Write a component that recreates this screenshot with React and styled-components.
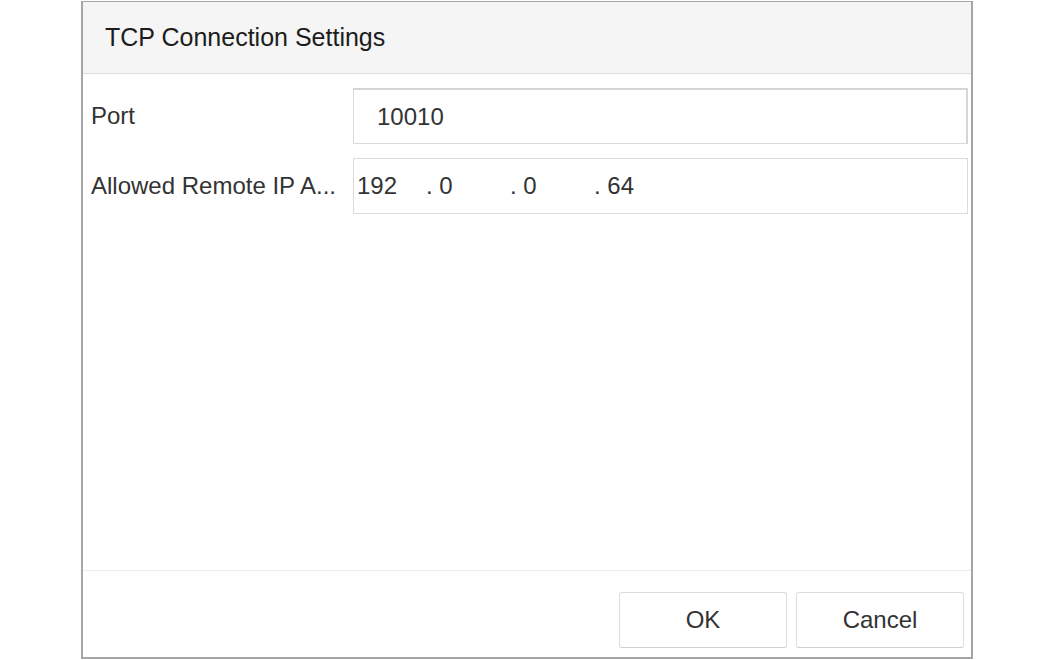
import styled, { createGlobalStyle } from "styled-components";

const Global = createGlobalStyle`
  html, body {
    margin: 0;
    padding: 0;
    background: #fff;
  }
  body {
    font-family: "Liberation Sans", Arial, sans-serif;
  }
`;

const Dialog = styled.div`
  box-sizing: border-box;
  margin: 1px 0 0 81px;
  width: 892px;
  height: 658px;
  border: 2px solid #a5a5a5;
  border-top-width: 1px;
  display: flex;
  flex-direction: column;
  background: #fff;
`;

const Header = styled.div`
  height: 71px;
  flex-shrink: 0;
  display: flex;
  align-items: center;
  padding-left: 22px;
  background: #f5f5f5;
  border-bottom: 1px solid #dcdcdc;
`;

const Title = styled.h1`
  margin: 0;
  font-size: 25px;
  font-weight: normal;
  color: #1c1c1c;
`;

const Body = styled.div`
  flex: 1;
  display: flex;
  flex-direction: column;
  gap: 14px;
  padding: 14px 3px 0 8px;
`;

const Row = styled.div`
  display: flex;
  align-items: center;
`;

const Label = styled.div`
  width: 262px;
  flex-shrink: 0;
  font-size: 24px;
  color: #333;
  white-space: nowrap;
  overflow: hidden;
`;

const Field = styled.div`
  box-sizing: border-box;
  flex: 1;
  height: 56px;
  display: flex;
  align-items: center;
  font-size: 24px;
  color: #333;
  border: 1px solid #dadada;
  border-top: ${p => (p.$focus ? "2px solid #d6d6d6" : "1px solid #dadada")};
  border-right: ${p => (p.$focus ? "2px solid #d6d6d6" : "1px solid #dadada")};
  padding-left: ${p => p.$pad || 0}px;
`;

const Segment = styled.span`
  box-sizing: border-box;
  width: ${p => p.$w}px;
  flex-shrink: 0;
  white-space: pre;
`;

const Footer = styled.div`
  flex-shrink: 0;
  display: flex;
  justify-content: flex-end;
  gap: 9px;
  padding: 21px 7px 9px 0;
  border-top: 1px solid #ececec;
`;

const Button = styled.button`
  width: 168px;
  height: 56px;
  background: #fff;
  border: 1px solid #dcdcdc;
  border-bottom-color: #cfcfcf;
  border-radius: 3px;
  font-family: "Liberation Sans", Arial, sans-serif;
  font-size: 24px;
  color: #333;
  cursor: pointer;
`;

const ipParts = ["192", "0", "0", "64"];

function App() {
  return (
    <>
      <Global />
      <Dialog>
        <Header>
          <Title>TCP Connection Settings</Title>
        </Header>
        <Body>
          <Row>
            <Label>Port</Label>
            <Field $focus $pad={23}>10010</Field>
          </Row>
          <Row>
            <Label>Allowed Remote IP A...</Label>
            <Field $pad={3}>
              {ipParts.map((part, i) => (
                <Segment key={i} $w={i === 0 ? 69 : 84}>
                  {i === 0 ? part : ". " + part}
                </Segment>
              ))}
            </Field>
          </Row>
        </Body>
        <Footer>
          <Button>OK</Button>
          <Button>Cancel</Button>
        </Footer>
      </Dialog>
    </>
  );
}

export default App;
